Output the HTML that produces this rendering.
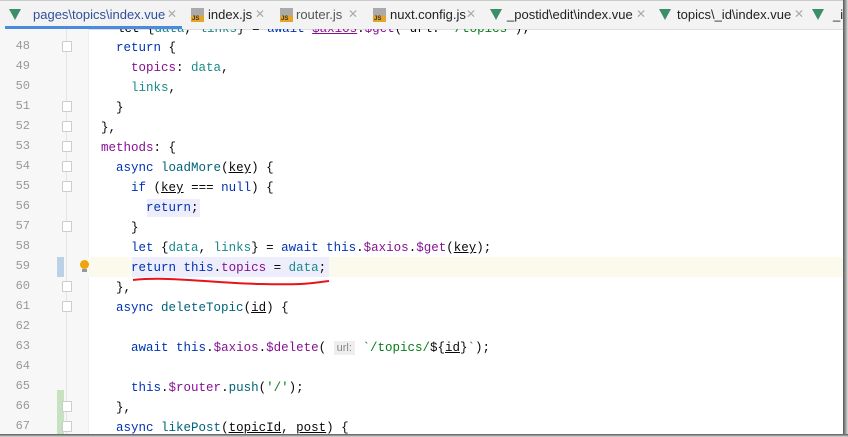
<!DOCTYPE html><html><head><style>
body{margin:0;width:848px;height:437px;overflow:hidden;background:#fff;font-family:"Liberation Sans",sans-serif;position:relative}
#tabs{position:absolute;left:0;top:0;width:843px;height:28px;background:#f3f3f3;border-bottom:1px solid #ddd;overflow:hidden;border-top:1px solid #ccc}
.tab{position:absolute;top:6px;font-size:13px;color:#222;white-space:nowrap}
.x{position:absolute;top:6px;font-size:12px;color:#aaa}
.v{position:absolute;top:8px;width:0;height:0;border-left:6px solid transparent;border-right:6px solid transparent;border-top:11px solid #3c8e6b}
.js{position:absolute;top:7px;width:13px;height:14px;background:linear-gradient(#aaa 0 55%,#e4a528 55%)}
.js:after{content:"JS";position:absolute;left:1px;bottom:0;font-size:6px;color:#333;font-weight:bold}
#ed{position:absolute;left:0;top:29px;width:843px;height:405px;overflow:hidden}
#gut{position:absolute;left:0;top:0;width:88px;height:405px;background:#f7f7f7;border-right:1px solid #eee}
.ln{position:absolute;left:0;width:30px;text-align:right;font-family:"Liberation Mono",monospace;font-size:12px;color:#999}
.code{position:absolute;font-family:"Liberation Mono",monospace;font-size:12.5px;white-space:pre;color:#080808}
.k{color:#0033b3}.p{color:#871094}.t{color:#1a8a8a}.f{color:#00627a}.s{color:#067d17}.u{text-decoration:underline}
.fold{position:absolute;left:62px;width:8px;height:9px;border:1px solid #ccc;background:#fff;border-radius:1px}
</style></head><body>
<div id="tabs">
<div class="v" style="left:9px"></div><div class="tab" style="left:33px;color:#2e4f9e">pages\topics\index.vue</div><div class="x" style="left:167px">✕</div>
<div style="position:absolute;left:5px;top:25px;width:177px;height:3px;background:#4a8bdf"></div>
<div class="js" style="left:191px"></div><div class="tab" style="left:208px">index.js</div><div class="x" style="left:255px">✕</div>
<div class="js" style="left:280px"></div><div class="tab" style="left:296px;color:#555">router.js</div><div class="x" style="left:348px">✕</div>
<div class="js" style="left:373px"></div><div class="tab" style="left:390px">nuxt.config.js</div><div class="x" style="left:466px">✕</div>
<div class="v" style="left:490px"></div><div class="tab" style="left:507px">_postid\edit\index.vue</div><div class="x" style="left:636px">✕</div>
<div class="v" style="left:659px"></div><div class="tab" style="left:677px">topics\_id\index.vue</div><div class="x" style="left:794px">✕</div>
<div class="v" style="left:812px"></div><div class="tab" style="left:833px">_id</div>
</div>
<div id="ed">
<div style="position:absolute;left:0;top:228px;width:843px;height:20px;background:#fcfaed"></div>
<div id="gut"></div>
<div style="position:absolute;left:88px;top:228px;width:755px;height:20px;background:#fcfaed"></div>
<div style="position:absolute;left:66px;top:0;width:1px;height:405px;background:#e4e4e4"></div>
<div style="position:absolute;left:57px;top:228px;width:7px;height:20px;background:#bcd0e6"></div>
<div style="position:absolute;left:57px;top:361px;width:7px;height:44px;background:#c6e2c0"></div>
<div style="position:absolute;left:80px;top:231px;width:9px;height:9px;border-radius:50%;background:#f0a30a"></div>
<div style="position:absolute;left:82px;top:240px;width:5px;height:3px;background:#999"></div>
<div style="position:absolute;left:132px;top:228px;width:197px;height:20px;background:#ededfc"></div>
<div style="position:absolute;left:147px;top:170px;width:53px;height:18px;background:#ededfc"></div>
<svg style="position:absolute;left:0;top:0" width="843" height="405"><path d="M133 251 C170 247 210 254 260 255 S310 254 329 252" stroke="#e8141c" stroke-width="2" fill="none"/></svg>
<div class="fold" style="top:12px"></div><div class="fold" style="top:72px"></div><div class="fold" style="top:92px"></div><div class="fold" style="top:112px"></div><div class="fold" style="top:132px"></div><div class="fold" style="top:152px"></div><div class="fold" style="top:192px"></div><div class="fold" style="top:252px"></div><div class="fold" style="top:272px"></div><div class="fold" style="top:372px"></div><div class="fold" style="top:392px"></div>
<div class="ln" style="top:10px">48</div><div class="ln" style="top:30px">49</div><div class="ln" style="top:50px">50</div><div class="ln" style="top:70px">51</div><div class="ln" style="top:90px">52</div><div class="ln" style="top:110px">53</div><div class="ln" style="top:130px">54</div><div class="ln" style="top:150px">55</div><div class="ln" style="top:170px">56</div><div class="ln" style="top:190px">57</div><div class="ln" style="top:210px">58</div><div class="ln" style="top:230px">59</div><div class="ln" style="top:250px">60</div><div class="ln" style="top:270px">61</div><div class="ln" style="top:290px">62</div><div class="ln" style="top:310px">63</div><div class="ln" style="top:330px">64</div><div class="ln" style="top:350px">65</div><div class="ln" style="top:370px">66</div><div class="ln" style="top:390px">67</div>
<div class="code" style="left:117px;top:-10px;line-height:20px">let {<span class="t">data</span>, <span class="t">links</span>} = <span class="k">await</span> <span class="p u">$axios</span>.<span class="p">$get</span>( url: <span class="s">'/topics'</span>);</div>
<div class="code" style="left:86px;top:9px;line-height:20px">    <span class="k">return</span> {
      <span class="p">topics</span>: <span class="t">data</span>,
      <span class="t">links</span>,
    }
  },
  <span class="p">methods</span>: {
    <span class="k">async</span> <span class="f">loadMore</span>(<span class="u">key</span>) {
      <span class="k">if</span> (<span class="u">key</span> === <span class="k">null</span>) {
        <span class="k">return</span>;
      }
      <span class="k">let</span> {<span class="t">data</span>, <span class="t">links</span>} = <span class="k">await</span> <span class="k">this</span>.<span class="p">$axios</span>.<span class="p">$get</span>(<span class="u">key</span>);
      <span class="k">return</span> <span class="k">this</span>.<span class="p">topics</span> = <span class="t">data</span>;
    },
    <span class="k">async</span> <span class="f">deleteTopic</span>(<span class="u">id</span>) {

      <span class="k">await</span> <span class="k">this</span>.<span class="p">$axios</span>.<span class="p">$delete</span>( <span style="font-family:'Liberation Sans';font-size:11px;color:#888;background:#eee;padding:1px 3px">url:</span> <span class="s">`/topics/</span>${<span class="u">id</span>}<span class="s">`</span>);

      <span class="k">this</span>.<span class="p">$router</span>.<span class="f">push</span>(<span class="s">'/'</span>);
    },
    <span class="k">async</span> <span class="f">likePost</span>(<span class="u">topicId</span>, <span class="u">post</span>) {</div>
</div>
<div style="position:absolute;left:843px;top:0;width:5px;height:437px;background:linear-gradient(90deg,#555,#ddd)"></div>
<div style="position:absolute;left:0;top:434px;width:848px;height:3px;background:linear-gradient(#555,#ddd)"></div>
</body></html>
